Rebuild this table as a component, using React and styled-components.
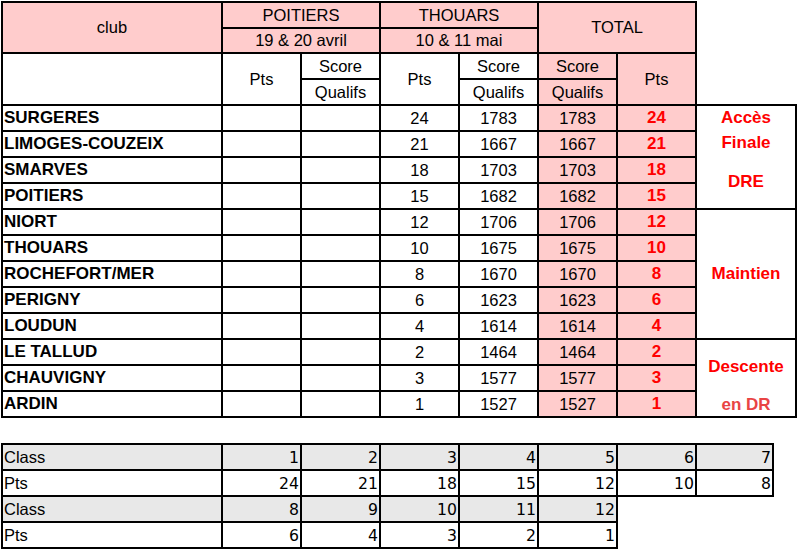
import React from 'react';
import styled, { createGlobalStyle } from 'styled-components';

const GlobalStyle = createGlobalStyle`
  html, body {
    margin: 0;
    padding: 0;
    background: #fff;
  }
  body {
    font-family: 'Liberation Sans', Arial, sans-serif;
    color: #000;
  }
`;

const PINK = '#ffcccc';
const RED = '#ff0000';

const Page = styled.div`
  width: 800px;
  height: 550px;
  padding: 1px 0 0 1px;
  box-sizing: border-box;
  overflow: hidden;
`;

const Top = styled.div`
  display: flex;
  align-items: flex-end;
`;

const Results = styled.div`
  display: grid;
  grid-template-columns: 218px repeat(6, 77px);
  grid-template-rows: 24px 23px 24px 24px repeat(12, 24px);
  gap: 2px;
  padding: 2px;
  background: #000;
`;

const Cell = styled.div`
  background: ${(p) => (p.$pink ? PINK : '#fff')};
  grid-column: span ${(p) => p.$cols || 1};
  grid-row: span ${(p) => p.$rows || 1};
  display: flex;
  align-items: center;
  justify-content: ${(p) => (p.$left ? 'flex-start' : 'center')};
  padding-left: ${(p) => (p.$left ? '1px' : '0')};
  font-size: ${(p) => (p.$bold ? '17px' : '16.5px')};
  font-weight: ${(p) => (p.$bold ? 700 : 400)};
  color: ${(p) => (p.$red ? RED : '#000')};
  white-space: nowrap;
  overflow: hidden;
`;

const Notes = styled.div`
  display: grid;
  grid-template-columns: 98px;
  grid-template-rows: 102px 128px 76px;
  gap: 2px;
  padding: 2px 2px 2px 0;
  background: #000;
`;

const Note = styled.div`
  background: #fff;
  display: flex;
  flex-direction: column;
  justify-content: ${(p) => (p.$center ? 'center' : 'flex-start')};
  align-items: center;
  font-size: 17px;
  font-weight: 700;
  color: ${RED};
`;

const NoteLine = styled.div`
  height: ${(p) => p.$h}px;
  display: flex;
  align-items: center;
  color: ${(p) => p.$color || RED};
`;

const Ranking = styled.div`
  margin-top: 25px;
  display: grid;
  grid-template-columns: 222px repeat(6, 79px) 77px;
  grid-auto-rows: 26px;
  grid-template-rows: 28px;
`;

const RankCell = styled.div`
  box-sizing: border-box;
  border-right: 2px solid #000;
  border-bottom: 2px solid #000;
  border-left: ${(p) => (p.$first ? '2px solid #000' : 'none')};
  border-top: ${(p) => (p.$top ? '2px solid #000' : 'none')};
  background: ${(p) => (p.$gray ? '#e8e8e8' : '#fff')};
  display: flex;
  align-items: center;
  justify-content: ${(p) => (p.$first ? 'flex-start' : 'flex-end')};
  padding: 0 1px;
  font-family: ${(p) =>
    p.$first ? "'Liberation Sans', Arial, sans-serif" : "'DejaVu Sans', Verdana, sans-serif"};
  font-size: ${(p) => (p.$first ? '16.5px' : '15.7px')};
`;

const clubs = [
  ['SURGERES', 24, 1783],
  ['LIMOGES-COUZEIX', 21, 1667],
  ['SMARVES', 18, 1703],
  ['POITIERS', 15, 1682],
  ['NIORT', 12, 1706],
  ['THOUARS', 10, 1675],
  ['ROCHEFORT/MER', 8, 1670],
  ['PERIGNY', 6, 1623],
  ['LOUDUN', 4, 1614],
  ['LE TALLUD', 2, 1464],
  ['CHAUVIGNY', 3, 1577],
  ['ARDIN', 1, 1527],
];

const scale = [
  [
    [1, 2, 3, 4, 5, 6, 7],
    [24, 21, 18, 15, 12, 10, 8],
  ],
  [
    [8, 9, 10, 11, 12],
    [6, 4, 3, 2, 1],
  ],
];

function RankRows() {
  const rows = [];
  scale.forEach(([places, pts], b) => {
    [
      ['Class', places, true],
      ['Pts', pts, false],
    ].forEach(([label, values, gray], r) => {
      const top = b === 0 && r === 0;
      rows.push(
        <React.Fragment key={`${b}-${r}`}>
          <RankCell $first $gray={gray} $top={top} style={{ gridColumn: 1 }}>
            {label}
          </RankCell>
          {values.map((v, i) => (
            <RankCell key={i} $gray={gray} $top={top}>
              {v}
            </RankCell>
          ))}
          {values.length < 7 && <div style={{ gridColumn: `span ${7 - values.length}` }} />}
        </React.Fragment>
      );
    });
  });
  return rows;
}

export default function App() {
  return (
    <Page>
      <GlobalStyle />
      <Top>
        <Results>
          <Cell $pink $rows={2}>club</Cell>
          <Cell $pink $cols={2}>POITIERS</Cell>
          <Cell $pink $cols={2}>THOUARS</Cell>
          <Cell $pink $cols={2} $rows={2}>TOTAL</Cell>
          <Cell $pink $cols={2}>19 &amp; 20 avril</Cell>
          <Cell $pink $cols={2}>10 &amp; 11 mai</Cell>

          <Cell $rows={2} />
          <Cell $rows={2}>Pts</Cell>
          <Cell>Score</Cell>
          <Cell $rows={2}>Pts</Cell>
          <Cell>Score</Cell>
          <Cell $pink>Score</Cell>
          <Cell $pink $rows={2}>Pts</Cell>
          <Cell>Qualifs</Cell>
          <Cell>Qualifs</Cell>
          <Cell $pink>Qualifs</Cell>

          {clubs.map(([name, pts, score]) => (
            <React.Fragment key={name}>
              <Cell $left $bold>{name}</Cell>
              <Cell />
              <Cell />
              <Cell>{pts}</Cell>
              <Cell>{score}</Cell>
              <Cell $pink>{score}</Cell>
              <Cell $pink $bold $red>{pts}</Cell>
            </React.Fragment>
          ))}
        </Results>

        <Notes>
          <Note>
            <NoteLine $h={24}>Accès</NoteLine>
            <NoteLine $h={26}>Finale</NoteLine>
            <NoteLine $h={52}>DRE</NoteLine>
          </Note>
          <Note $center>Maintien</Note>
          <Note>
            <NoteLine $h={54}>Descente</NoteLine>
            <NoteLine $h={22} $color="#e94444">en DR</NoteLine>
          </Note>
        </Notes>
      </Top>

      <Ranking>
        <RankRows />
      </Ranking>
    </Page>
  );
}
